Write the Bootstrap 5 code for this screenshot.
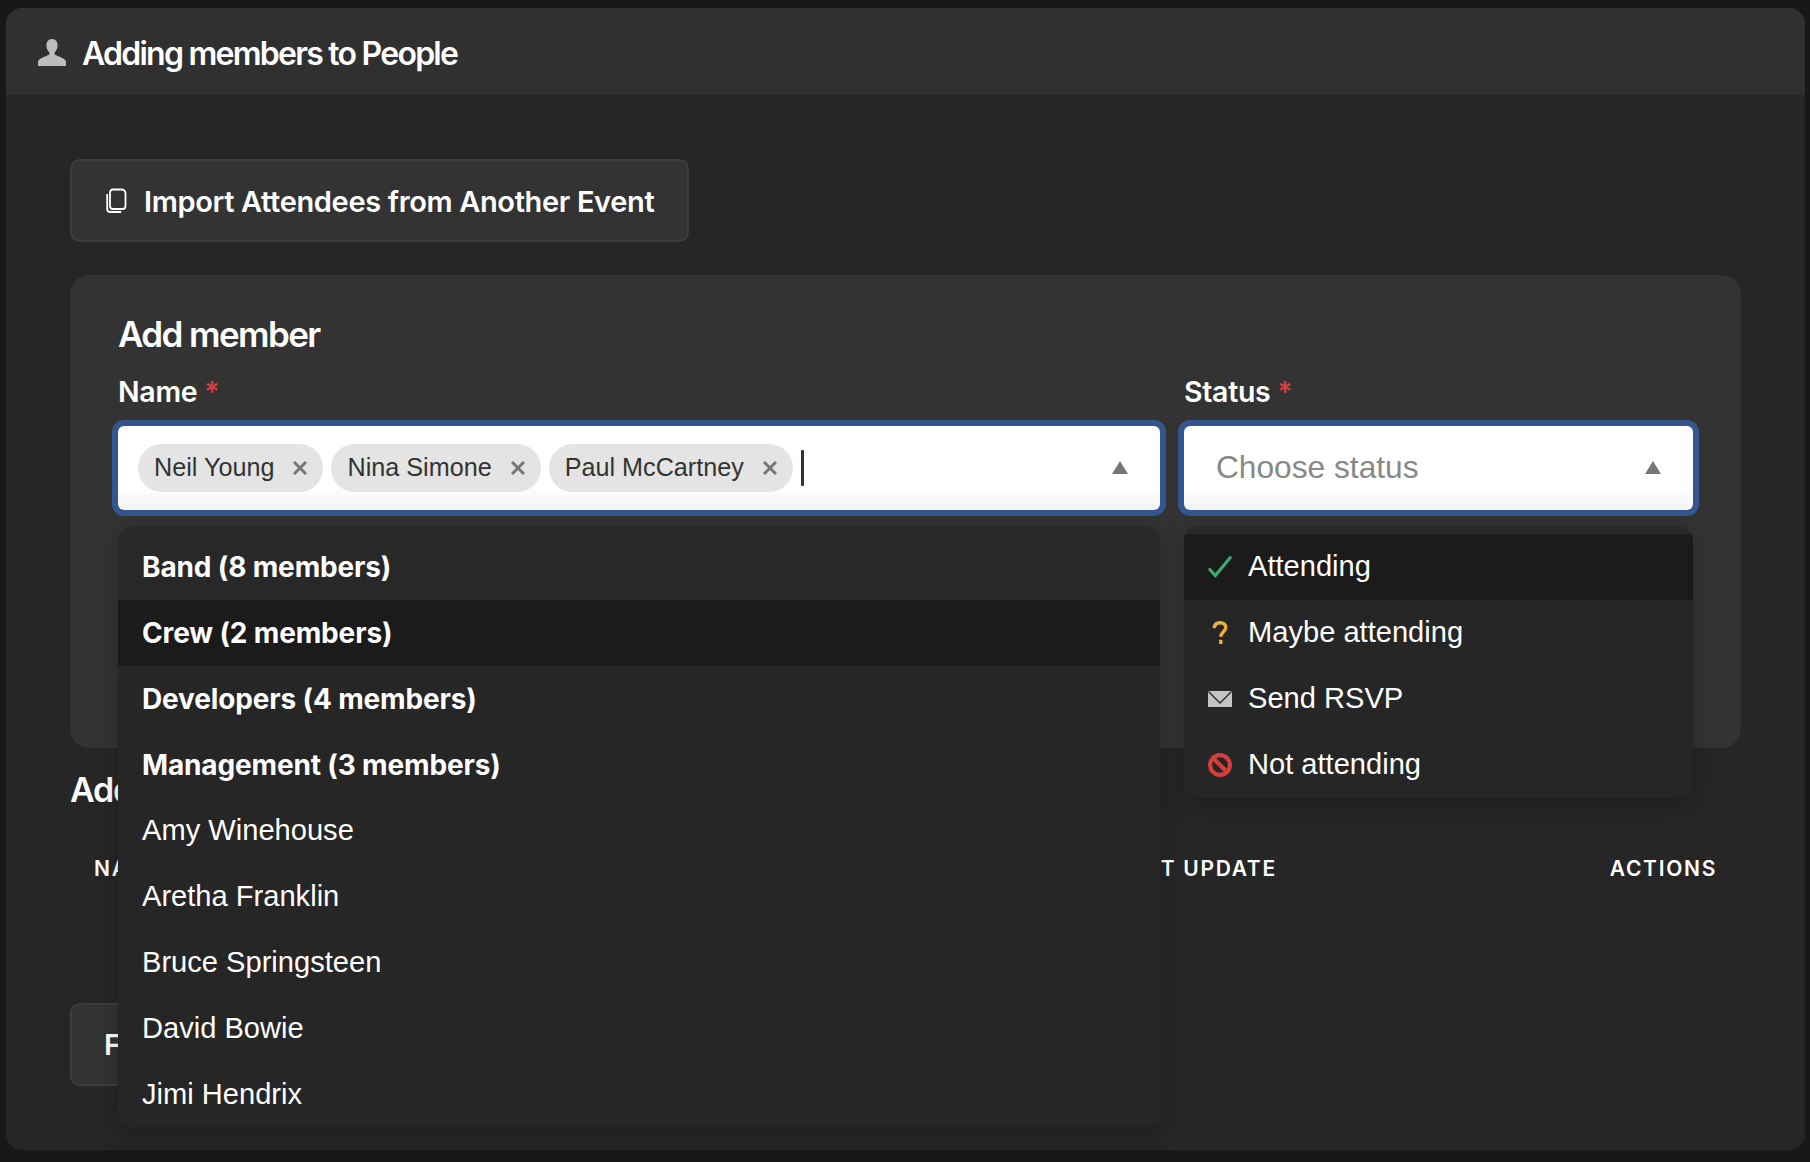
<!DOCTYPE html>
<html lang="en">
<head>
<meta charset="utf-8">
<title>Adding members to People</title>
<link href="https://cdn.jsdelivr.net/npm/bootstrap@5.3.0/dist/css/bootstrap.min.css" rel="stylesheet">
<style>
html,body{height:100%;}
body{background:#181818;color:#fff;font-family:"Liberation Sans",Arial,sans-serif;overflow:hidden;}
.page-wrap{padding:8px 5px 12px 6px;height:1162px;}
.shell-card{background:#262626;border:0;border-radius:16px;height:100%;color:#fff;overflow:hidden;}
.shell-head{background:#303030;border:0;height:88px;padding:5px 32px 0;gap:16px;border-radius:0;}
.shell-head svg{margin-top:-2px;}
.shell-head h1{font-family:"Inter",sans-serif;font-size:32px;font-weight:600;letter-spacing:-1.75px;margin:0;color:#fff;}
.shell-body{padding:64px;}
.copy-btn{background:#333;border:2px solid #3e3e3e;border-radius:10px;height:83px;width:619px;color:#fff;font-family:"Inter",sans-serif;font-weight:600;font-size:29px;letter-spacing:-.35px;padding:3px 0 0 34px;gap:17px;margin-bottom:33px;}
.copy-btn svg{margin-top:-3px;}
.copy-btn:hover{background:#333;color:#fff;border-color:#3e3e3e;}
.add-panel{background:#333;border-radius:20px;padding:38px 48px 238px;margin-bottom:20px;}
.add-panel h2{font-family:"Inter",sans-serif;font-size:35px;font-weight:600;letter-spacing:-1.6px;margin:0 0 19px;line-height:42px;}
.fld-label{font-family:"Inter",sans-serif;font-weight:600;font-size:28.500px;letter-spacing:-.3px;line-height:36px;margin-bottom:16px;display:block;color:#fff;}
.req-star{color:#d43f3f;margin-left:0;}
.pick-box{background:linear-gradient(#fff 70%,#f4f4f4);height:84px;border-radius:6px;box-shadow:0 0 0 6px #33568f;padding:0 16px 0 20px;gap:8px;position:relative;}
.name-tag{background:#e4e4e4;color:#333;height:48px;border-radius:24px;padding:0 16px;font-size:25.200px;gap:19px;white-space:nowrap;}
.tag-x{width:14px;height:14px;flex:none;}
.caret-bar{width:3px;height:36px;background:#333;flex:none;margin-left:0;border-radius:1px;}
.up-tri{width:16px;height:13px;flex:none;margin-right:16px;}
.hold-text{color:#888;font-size:31.700px;padding-left:12px;}
.pick-menu{position:absolute;display:block;top:100%;left:0;right:0;margin-top:16px;padding:8px 0 0;background:linear-gradient(#292929,#262626 30%);border:0;border-radius:14px;box-shadow:0 6px 24px rgba(0,0,0,.22);overflow:hidden;z-index:10;}
.pick-menu.is-name{height:601px;}
.pick-menu .dropdown-item{height:66px;color:#fff;font-size:29.100px;padding:1px 24px 0;display:flex;align-items:center;gap:16px;background:transparent;}
.pick-menu .dropdown-item.is-strong{font-family:"Inter",sans-serif;font-weight:700;font-size:28px;letter-spacing:-.15px;padding:0 24px;}
.pick-menu .dropdown-item.is-hot{background:#1b1b1b;}
.stat-icon{width:24px;height:24px;flex:none;overflow:visible;}
.under-title{font-family:"Inter",sans-serif;font-size:34px;font-weight:600;letter-spacing:-1.2px;margin:0 0 27px;line-height:44px;}
.member-tbl{--bs-table-bg:transparent;--bs-table-color:#fff;margin-bottom:105px;table-layout:fixed;}
.member-tbl th{border:0;font-family:"Inter",sans-serif;font-size:21px;font-weight:600;letter-spacing:1.7px;padding:14px 24px;white-space:nowrap;}
.col-name{width:610px;}
.col-stat{width:411px;}
.col-last{width:300px;}
.finish-btn{background:#333;border:2px solid #3e3e3e;border-radius:10px;height:83px;width:300px;color:#fff;font-family:"Inter",sans-serif;font-weight:600;font-size:29px;text-align:left;padding:0 0 0 32px;}
</style>
</head>
<body>
<div class="page-wrap">
  <div class="card shell-card">
    <div class="card-header shell-head d-flex align-items-center">
      <svg width="28" height="27" viewBox="0 0 28 28" preserveAspectRatio="none" aria-hidden="true"><path fill="#bdbdbd" d="M14 0c-3.700 0-5.600 3-5.600 6.700 0 3 1.300 5.600 3 7.200v2.300c-2.500 1.700-9.900 3.400-11.400 7V28h28v-4.800c-1.500-3.600-8.900-5.300-11.400-7v-2.300c1.700-1.600 3-4.200 3-7.200C19.600 3 17.700 0 14 0z"/></svg>
      <h1>Adding members to People</h1>
    </div>
    <div class="card-body shell-body">
      <button type="button" class="btn copy-btn d-flex align-items-center">
        <svg width="21" height="25" viewBox="0 0 21 25" fill="none" stroke="#fff" stroke-width="1.800" aria-hidden="true"><path d="M7 1.500h8.500a4 4 0 0 1 4 4v12.500a3 3 0 0 1-3 3H7a3 3 0 0 1-3-3V4.500a3 3 0 0 1 3-3z"/><path d="M1.200 6v15a3 3 0 0 0 3 3h11"/></svg>
        <span>Import Attendees from Another Event</span>
      </button>
      <div class="add-panel">
        <h2>Add member</h2>
        <div class="row g-4">
          <div class="col-8">
            <label class="fld-label">Name <span class="req-star">*</span></label>
            <div class="dropdown">
              <div class="pick-box d-flex align-items-center">
                <span class="name-tag d-inline-flex align-items-center">Neil Young<svg class="tag-x" viewBox="0 0 14 14" stroke="#777" stroke-width="3"><path d="M1 1l12 12M13 1L1 13"/></svg></span>
                <span class="name-tag d-inline-flex align-items-center">Nina Simone<svg class="tag-x" viewBox="0 0 14 14" stroke="#777" stroke-width="3"><path d="M1 1l12 12M13 1L1 13"/></svg></span>
                <span class="name-tag d-inline-flex align-items-center">Paul McCartney<svg class="tag-x" viewBox="0 0 14 14" stroke="#777" stroke-width="3"><path d="M1 1l12 12M13 1L1 13"/></svg></span>
                <span class="caret-bar"></span>
                <svg class="up-tri ms-auto" viewBox="0 0 16 13"><path fill="#777" d="M8 0l8 13H0z"/></svg>
              </div>
              <div class="dropdown-menu pick-menu is-name">
                <a class="dropdown-item is-strong" href="#">Band (8 members)</a>
                <a class="dropdown-item is-strong is-hot" href="#">Crew (2 members)</a>
                <a class="dropdown-item is-strong" href="#">Developers (4 members)</a>
                <a class="dropdown-item is-strong" href="#">Management (3 members)</a>
                <a class="dropdown-item" href="#">Amy Winehouse</a>
                <a class="dropdown-item" href="#">Aretha Franklin</a>
                <a class="dropdown-item" href="#">Bruce Springsteen</a>
                <a class="dropdown-item" href="#">David Bowie</a>
                <a class="dropdown-item" href="#">Jimi Hendrix</a>
              </div>
            </div>
          </div>
          <div class="col-4">
            <label class="fld-label">Status <span class="req-star">*</span></label>
            <div class="dropdown">
              <div class="pick-box d-flex align-items-center">
                <span class="hold-text">Choose status</span>
                <svg class="up-tri ms-auto" viewBox="0 0 16 13"><path fill="#777" d="M8 0l8 13H0z"/></svg>
              </div>
              <div class="dropdown-menu pick-menu">
                <a class="dropdown-item is-hot" href="#"><svg class="stat-icon" viewBox="0 0 24 24" fill="none" stroke="#3fa873" stroke-width="3.200" stroke-linecap="round"><path d="M1.800 14.500l5.500 6L22.200 2.800"/></svg>Attending</a>
                <a class="dropdown-item" href="#"><svg class="stat-icon" viewBox="0 0 24 24" fill="none" stroke="#f0ad3e" stroke-width="3.400"><path d="M6.200 7.200C6.400 3.500 9 1.800 12.200 1.800c3.300 0 5.600 2 5.600 4.800 0 4-5 4.400-5 9.200"/><path d="M12.800 18.800v4.200"/></svg>Maybe attending</a>
                <a class="dropdown-item" href="#"><svg class="stat-icon" viewBox="0 0 24 24"><path fill="#c4c4c4" d="M0 4h24v15.500a.500.500 0 0 1-.500.500H.500a.500.500 0 0 1-.500-.500z"/><path fill="none" stroke="#282828" stroke-width="1.400" d="M.500 4.500L12 16 23.500 4.500"/></svg>Send RSVP</a>
                <a class="dropdown-item" href="#"><svg class="stat-icon" viewBox="0 0 24 24" fill="none" stroke="#d63d3d" stroke-width="4.200"><circle cx="12" cy="12" r="9.900"/><path d="M5 5l14 14"/></svg>Not attending</a>
              </div>
            </div>
          </div>
        </div>
      </div>
      <h2 class="under-title">Added members</h2>
      <table class="table member-tbl">
        <thead><tr><th class="col-name">NAME</th><th class="col-stat">STATUS</th><th class="col-last">LAST UPDATE</th><th class="text-end">ACTIONS</th></tr></thead>
      </table>
      <button type="button" class="btn finish-btn">Finish</button>
    </div>
  </div>
</div>
<script src="https://cdn.jsdelivr.net/npm/bootstrap@5.3.0/dist/js/bootstrap.bundle.min.js"></script>
</body>
</html>
